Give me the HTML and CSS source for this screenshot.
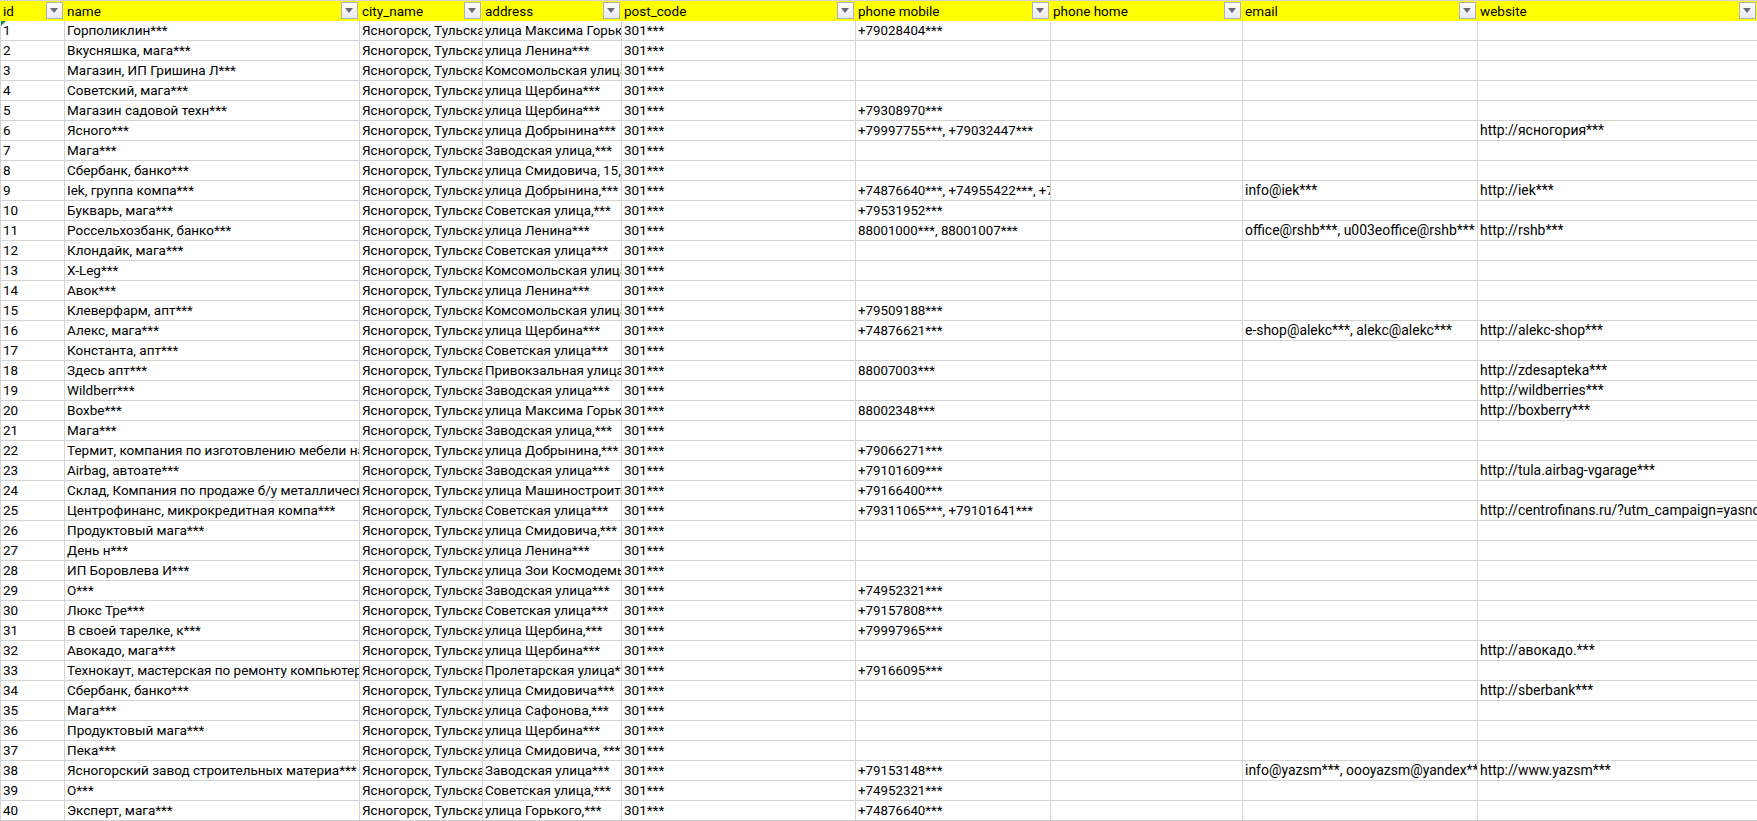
FILE: index.html
```html
<!DOCTYPE html>
<html lang="ru">
<head>
<meta charset="utf-8">
<title>Sheet</title>
<link rel="stylesheet" href="styles.css">
</head>
<body>
<table class="sheet">
<colgroup><col class="c-id"><col class="c-name"><col class="c-city"><col class="c-addr"><col class="c-post"><col class="c-mobile"><col class="c-home"><col class="c-email"><col class="c-web"></colgroup>
<thead><tr>
<th>id<span class="filter"></span></th><th>name<span class="filter"></span></th><th>city_name<span class="filter"></span></th><th>address<span class="filter"></span></th><th>post_code<span class="filter"></span></th><th>phone mobile<span class="filter"></span></th><th>phone home<span class="filter"></span></th><th>email<span class="filter"></span></th><th>website<span class="filter"></span></th>
</tr></thead>
<tbody>
<tr><td class="flag">1</td><td>Горполиклин***</td><td>Ясногорск, Тульская</td><td>улица Максима Горького,***</td><td>301***</td><td>+79028404***</td><td></td><td></td><td></td></tr>
<tr><td>2</td><td>Вкусняшка, мага***</td><td>Ясногорск, Тульская</td><td>улица Ленина***</td><td>301***</td><td></td><td></td><td></td><td></td></tr>
<tr><td>3</td><td>Магазин, ИП Гришина Л***</td><td>Ясногорск, Тульская</td><td>Комсомольская улица,***</td><td>301***</td><td></td><td></td><td></td><td></td></tr>
<tr><td>4</td><td>Советский, мага***</td><td>Ясногорск, Тульская</td><td>улица Щербина***</td><td>301***</td><td></td><td></td><td></td><td></td></tr>
<tr><td>5</td><td>Магазин садовой техн***</td><td>Ясногорск, Тульская</td><td>улица Щербина***</td><td>301***</td><td>+79308970***</td><td></td><td></td><td></td></tr>
<tr><td>6</td><td>Ясного***</td><td>Ясногорск, Тульская</td><td>улица Добрынина***</td><td>301***</td><td>+79997755***, +79032447***</td><td></td><td></td><td>http://ясногория***</td></tr>
<tr><td>7</td><td>Мага***</td><td>Ясногорск, Тульская</td><td>Заводская улица,***</td><td>301***</td><td></td><td></td><td></td><td></td></tr>
<tr><td>8</td><td>Сбербанк, банко***</td><td>Ясногорск, Тульская</td><td>улица Смидовича, 15,***</td><td>301***</td><td></td><td></td><td></td><td></td></tr>
<tr><td>9</td><td>Iek, группа компа***</td><td>Ясногорск, Тульская</td><td>улица Добрынина,***</td><td>301***</td><td>+74876640***, +74955422***, +74955422***</td><td></td><td>info@iek***</td><td>http://iek***</td></tr>
<tr><td>10</td><td>Букварь, мага***</td><td>Ясногорск, Тульская</td><td>Советская улица,***</td><td>301***</td><td>+79531952***</td><td></td><td></td><td></td></tr>
<tr><td>11</td><td>Россельхозбанк, банко***</td><td>Ясногорск, Тульская</td><td>улица Ленина***</td><td>301***</td><td>88001000***, 88001007***</td><td></td><td>office@rshb***, u003eoffice@rshb***</td><td>http://rshb***</td></tr>
<tr><td>12</td><td>Клондайк, мага***</td><td>Ясногорск, Тульская</td><td>Советская улица***</td><td>301***</td><td></td><td></td><td></td><td></td></tr>
<tr><td>13</td><td>X-Leg***</td><td>Ясногорск, Тульская</td><td>Комсомольская улица,***</td><td>301***</td><td></td><td></td><td></td><td></td></tr>
<tr><td>14</td><td>Авок***</td><td>Ясногорск, Тульская</td><td>улица Ленина***</td><td>301***</td><td></td><td></td><td></td><td></td></tr>
<tr><td>15</td><td>Клеверфарм, апт***</td><td>Ясногорск, Тульская</td><td>Комсомольская улица,***</td><td>301***</td><td>+79509188***</td><td></td><td></td><td></td></tr>
<tr><td>16</td><td>Алекс, мага***</td><td>Ясногорск, Тульская</td><td>улица Щербина***</td><td>301***</td><td>+74876621***</td><td></td><td>e-shop@alekc***, alekc@alekc***</td><td>http://alekc-shop***</td></tr>
<tr><td>17</td><td>Константа, апт***</td><td>Ясногорск, Тульская</td><td>Советская улица***</td><td>301***</td><td></td><td></td><td></td><td></td></tr>
<tr><td>18</td><td>Здесь апт***</td><td>Ясногорск, Тульская</td><td>Привокзальная улица,***</td><td>301***</td><td>88007003***</td><td></td><td></td><td>http://zdesapteka***</td></tr>
<tr><td>19</td><td>Wildberr***</td><td>Ясногорск, Тульская</td><td>Заводская улица***</td><td>301***</td><td></td><td></td><td></td><td>http://wildberries***</td></tr>
<tr><td>20</td><td>Boxbe***</td><td>Ясногорск, Тульская</td><td>улица Максима Горького,***</td><td>301***</td><td>88002348***</td><td></td><td></td><td>http://boxberry***</td></tr>
<tr><td>21</td><td>Мага***</td><td>Ясногорск, Тульская</td><td>Заводская улица,***</td><td>301***</td><td></td><td></td><td></td><td></td></tr>
<tr><td>22</td><td>Термит, компания по изготовлению мебели на заказ***</td><td>Ясногорск, Тульская</td><td>улица Добрынина,***</td><td>301***</td><td>+79066271***</td><td></td><td></td><td></td></tr>
<tr><td>23</td><td>Airbag, автоате***</td><td>Ясногорск, Тульская</td><td>Заводская улица***</td><td>301***</td><td>+79101609***</td><td></td><td></td><td>http://tula.airbag-vgarage***</td></tr>
<tr><td>24</td><td>Склад, Компания по продаже б/у металлических***</td><td>Ясногорск, Тульская</td><td>улица Машиностроителей***</td><td>301***</td><td>+79166400***</td><td></td><td></td><td></td></tr>
<tr><td>25</td><td>Центрофинанс, микрокредитная компа***</td><td>Ясногорск, Тульская</td><td>Советская улица***</td><td>301***</td><td>+79311065***, +79101641***</td><td></td><td></td><td>http://centrofinans.ru/?utm_campaign=yasnogorsk***</td></tr>
<tr><td>26</td><td>Продуктовый мага***</td><td>Ясногорск, Тульская</td><td>улица Смидовича,***</td><td>301***</td><td></td><td></td><td></td><td></td></tr>
<tr><td>27</td><td>День н***</td><td>Ясногорск, Тульская</td><td>улица Ленина***</td><td>301***</td><td></td><td></td><td></td><td></td></tr>
<tr><td>28</td><td>ИП Боровлева И***</td><td>Ясногорск, Тульская</td><td>улица Зои Космодемьянской***</td><td>301***</td><td></td><td></td><td></td><td></td></tr>
<tr><td>29</td><td>О***</td><td>Ясногорск, Тульская</td><td>Заводская улица***</td><td>301***</td><td>+74952321***</td><td></td><td></td><td></td></tr>
<tr><td>30</td><td>Люкс Тре***</td><td>Ясногорск, Тульская</td><td>Советская улица***</td><td>301***</td><td>+79157808***</td><td></td><td></td><td></td></tr>
<tr><td>31</td><td>В своей тарелке, к***</td><td>Ясногорск, Тульская</td><td>улица Щербина,***</td><td>301***</td><td>+79997965***</td><td></td><td></td><td></td></tr>
<tr><td>32</td><td>Авокадо, мага***</td><td>Ясногорск, Тульская</td><td>улица Щербина***</td><td>301***</td><td></td><td></td><td></td><td>http://авокадо.***</td></tr>
<tr><td>33</td><td>Технокаут, мастерская по ремонту компьютеров***</td><td>Ясногорск, Тульская</td><td>Пролетарская улица***</td><td>301***</td><td>+79166095***</td><td></td><td></td><td></td></tr>
<tr><td>34</td><td>Сбербанк, банко***</td><td>Ясногорск, Тульская</td><td>улица Смидовича***</td><td>301***</td><td></td><td></td><td></td><td>http://sberbank***</td></tr>
<tr><td>35</td><td>Мага***</td><td>Ясногорск, Тульская</td><td>улица Сафонова,***</td><td>301***</td><td></td><td></td><td></td><td></td></tr>
<tr><td>36</td><td>Продуктовый мага***</td><td>Ясногорск, Тульская</td><td>улица Щербина***</td><td>301***</td><td></td><td></td><td></td><td></td></tr>
<tr><td>37</td><td>Пека***</td><td>Ясногорск, Тульская</td><td>улица Смидовича, ***</td><td>301***</td><td></td><td></td><td></td><td></td></tr>
<tr><td>38</td><td>Ясногорский завод строительных материа***</td><td>Ясногорск, Тульская</td><td>Заводская улица***</td><td>301***</td><td>+79153148***</td><td></td><td>info@yazsm***, oooyazsm@yandex***</td><td>http://www.yazsm***</td></tr>
<tr><td>39</td><td>О***</td><td>Ясногорск, Тульская</td><td>Советская улица,***</td><td>301***</td><td>+74952321***</td><td></td><td></td><td></td></tr>
<tr><td>40</td><td>Эксперт, мага***</td><td>Ясногорск, Тульская</td><td>улица Горького,***</td><td>301***</td><td>+74876640***</td><td></td><td></td><td></td></tr>
</tbody>
</table>
</body>
</html>
```
FILE: styles.css
```css
html, body {
  margin: 0;
  background: #fff;
  overflow: hidden;
}

.sheet {
  table-layout: fixed;
  width: 1757px;
  border-collapse: separate;
  border-spacing: 0;
  border-top: 1px solid #d4d4d4;
  font-family: Roboto, "Liberation Sans", sans-serif;
  color: #000;
}

.c-id { width: 64px; }
.c-name { width: 295px; }
.c-city { width: 123px; }
.c-addr { width: 139px; }
.c-post { width: 234px; }
.c-mobile { width: 195px; }
.c-home { width: 192px; }
.c-email { width: 235px; }
.c-web { width: 280px; }

th {
  position: relative;
  height: 20px;
  padding: 0 0 0 3px;
  background: #ff0;
  font-size: 13.5px;
  font-weight: 400;
  text-align: left;
  line-height: 20px;
  white-space: nowrap;
  overflow: hidden;
}

td {
  position: relative;
  height: 19px;
  padding: 0 0 0 2px;
  border-left: 1px solid #d4d4d4;
  border-bottom: 1px solid #d4d4d4;
  font-size: 13.5px;
  line-height: 19px;
  white-space: nowrap;
  overflow: hidden;
}

/* Roboto runs at a different width from the original face, so columns are tuned to clip at the same letters */
td:nth-child(4) { font-size: 13.4px; }
td:nth-child(6) { font-size: 13.3px; }
td:nth-child(8) { font-size: 13.95px; }
td:nth-child(9) { font-size: 13.95px; }

.filter {
  position: absolute;
  top: 1px;
  right: 1px;
  box-sizing: border-box;
  width: 17px;
  height: 17px;
  border: 1px solid #a9b0c4;
  background: linear-gradient(#ffffff, #e9e9ee);
}

.filter::before {
  content: "";
  position: absolute;
  top: 5px;
  left: 3px;
  border-style: solid;
  border-width: 5px 4.5px 0;
  border-color: #6a6a74 transparent transparent;
}

.flag::before {
  content: "";
  position: absolute;
  top: 0;
  left: 0;
  border-style: solid;
  border-width: 5px 5px 0 0;
  border-color: #1f8a3a transparent transparent;
}
```
